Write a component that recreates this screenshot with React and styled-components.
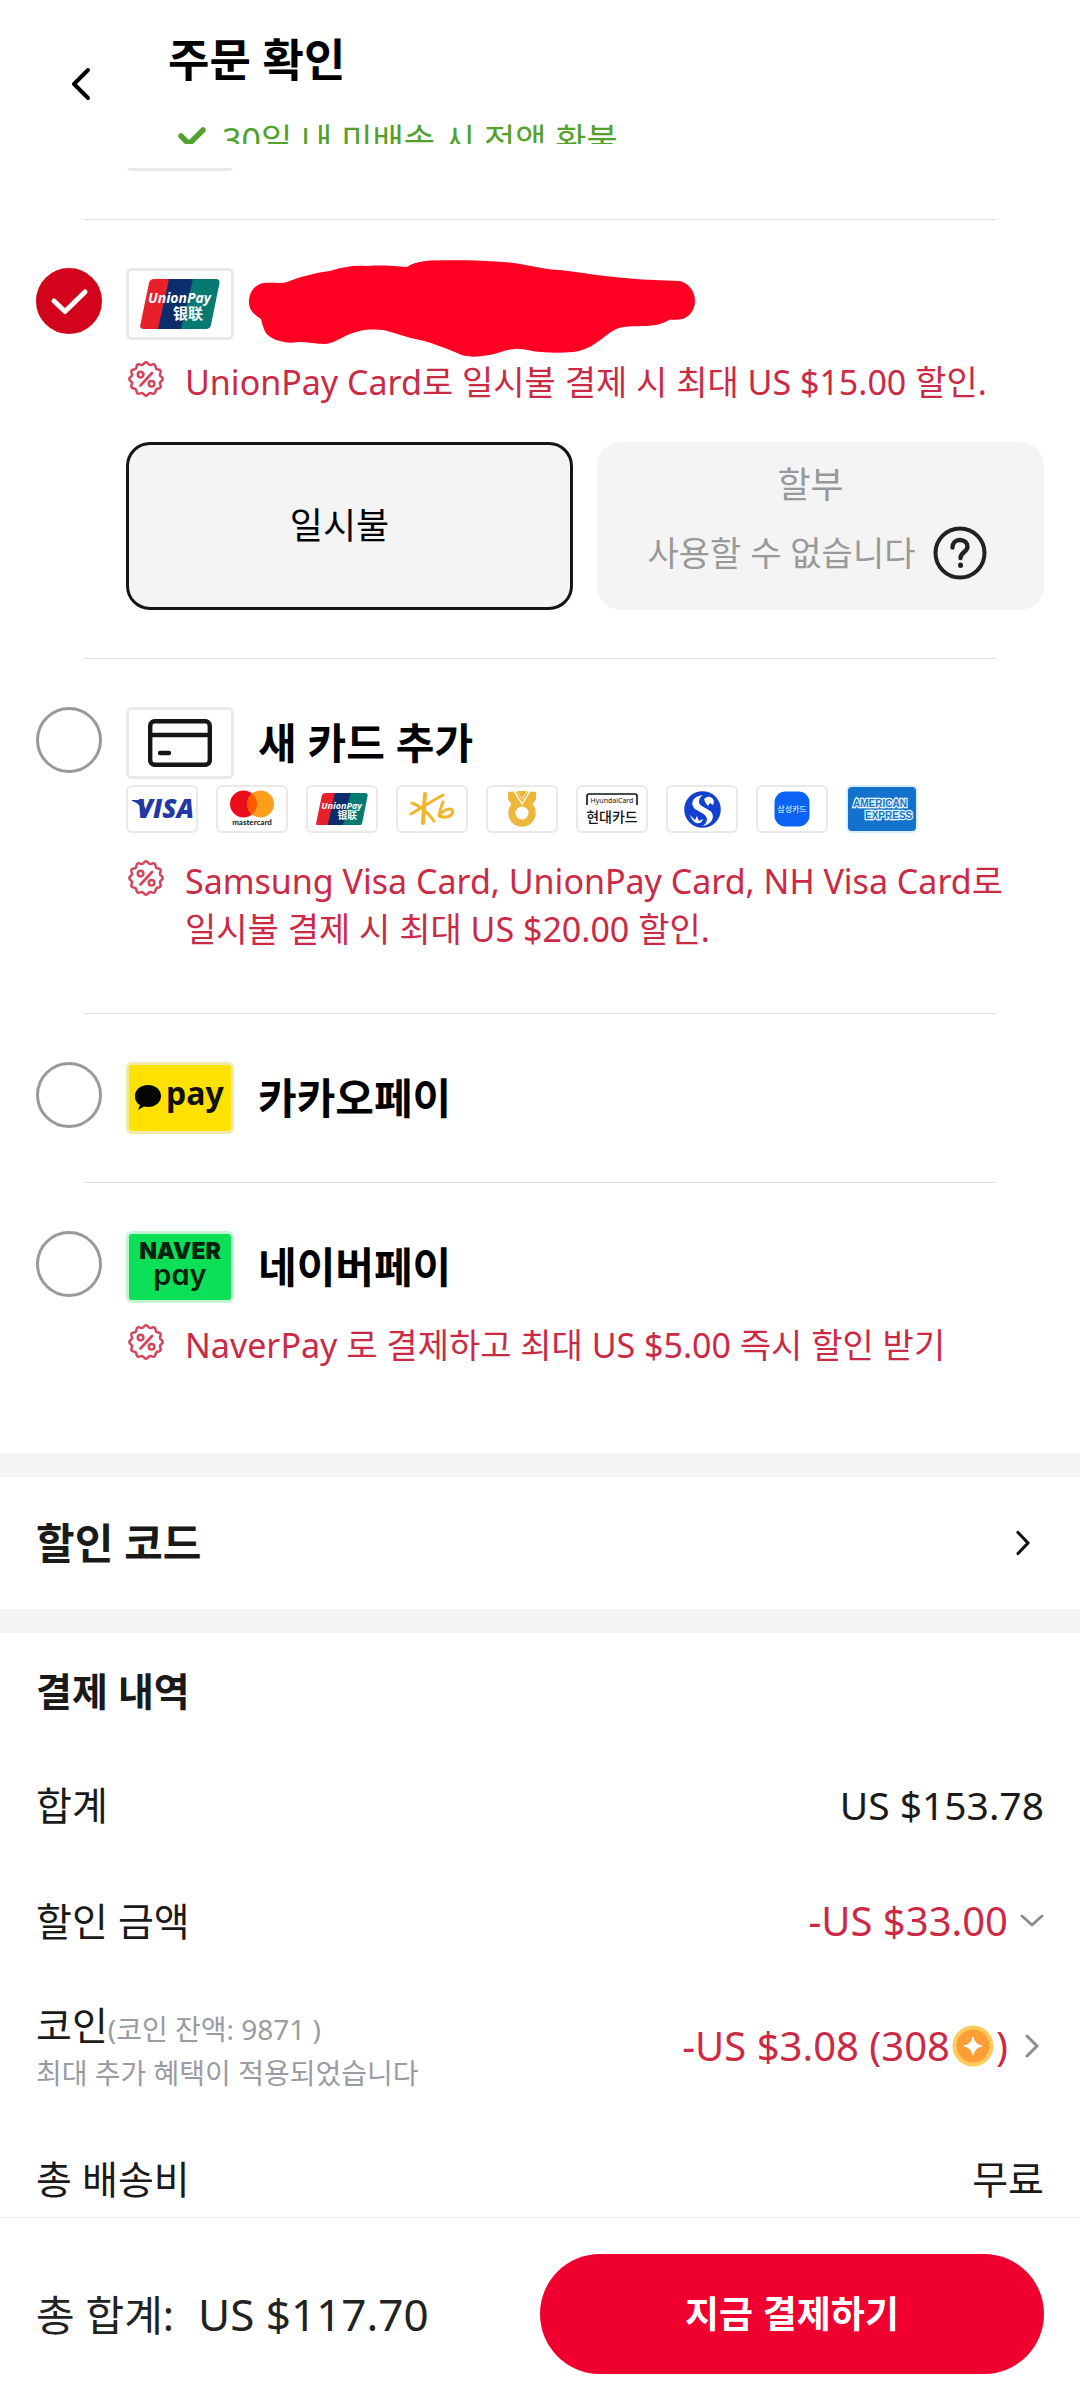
import React, { useState } from "react";
import styled, { createGlobalStyle } from "styled-components";

const GlobalStyle = createGlobalStyle`
  *, *::before, *::after { box-sizing: border-box; }
  body {
    margin: 0;
    background: #fff;
    color: #1a1a1a;
    font-family: "Noto Sans", "Noto Sans CJK KR", sans-serif;
  }
  h1, h2, p, dl, dt, dd, ul { margin: 0; padding: 0; }
  button { font-family: inherit; border: 0; padding: 0; background: none; color: inherit; cursor: pointer; }
  svg { display: block; flex: none; }
`;

const Page = styled.div`
  min-height: 100vh;
  display: flex;
  flex-direction: column;
`;

const Header = styled.header`
  display: grid;
  grid-template-columns: 168px 1fr;
  align-items: center;
`;

const BackButton = styled.button`
  display: flex;
  justify-content: center;
  padding: 24px 6px 24px 0;
`;

const HeaderBody = styled.div`
  padding: 30px 36px 24px 0;
`;

const PageTitle = styled.h1`
  font-size: 45px;
  line-height: 60px;
  font-weight: 700;
  color: #000;
`;

const Guarantee = styled.p`
  display: flex;
  align-items: flex-start;
  gap: 16px;
  height: 28px;
  margin-top: 26px;
  padding-left: 10px;
  overflow: hidden;
  font-size: 34px;
  line-height: 48px;
  color: #52a12b;
`;

const Main = styled.main`
  flex: 1;
`;

const ScrolledOption = styled.div`
  display: flex;
  align-items: flex-end;
  height: 3px;
  padding-left: 126px;
  overflow: hidden;
`;

const OptionList = styled.div`
  padding: 48px 0 24px;
`;

const Divider = styled.hr`
  height: 1px;
  margin: 0 84px;
  border: 0;
  background: #e0e0e0;
`;

const Option = styled.section`
  display: grid;
  grid-template-columns: 66px 1fr;
  column-gap: 24px;
  padding: 48px 36px;
`;

const RadioBox = styled.span`
  display: grid;
  width: 66px;
  height: 66px;
  > * { grid-area: 1 / 1; }
  > svg { pointer-events: none; }
`;

const Radio = styled.input`
  appearance: none;
  width: 66px;
  height: 66px;
  margin: 0;
  border: 3px solid #999;
  border-radius: 50%;
  background: #fff;
  &:checked {
    border-color: #d3031c;
    background: #d3031c;
  }
`;

const OptionHead = styled.label`
  display: flex;
  align-items: center;
  gap: 24px;
  height: 72px;
  font-size: 42px;
  line-height: 60px;
  font-weight: 700;
  color: #000;
`;

const LogoBox = styled.span`
  display: flex;
  flex: none;
  align-items: center;
  justify-content: center;
  width: ${(p) => (p.$small ? 72 : 108)}px;
  height: ${(p) => (p.$small ? 48 : 72)}px;
  border: ${(p) => (p.$small ? 2 : 3)}px solid ${(p) => p.$edge || "#e9e9e9"};
  border-radius: 6px;
  background: ${(p) => p.$fill || "#fff"};
`;

const HiddenNumber = styled.span`
  position: relative;
  > svg {
    position: absolute;
    left: -9px;
    top: -44px;
  }
`;

const BrandRow = styled.div`
  display: flex;
  flex-wrap: wrap;
  gap: 18px;
  padding: 6px 0;
`;

const Notice = styled.p`
  display: flex;
  align-items: flex-start;
  gap: 21px;
  margin-top: 18px;
  padding: 0 0 12px 2px;
  font-size: 34px;
  line-height: 48px;
  color: #cc2945;
  word-break: keep-all;
  > svg { margin-top: 3px; }
`;

const Plans = styled.div`
  display: grid;
  grid-template-columns: 1fr 1fr;
  gap: 24px;
  margin-top: 24px;
`;

const Plan = styled.button`
  display: flex;
  flex-direction: column;
  align-items: center;
  justify-content: center;
  height: 168px;
  border: 3px solid ${(p) => (p.$active ? "#151515" : "#f4f4f4")};
  border-radius: 24px;
  background: #f4f4f4;
  font-size: 36px;
  line-height: 54px;
  color: ${(p) => (p.$active ? "#000" : "#999")};
`;

const PlanLabel = styled.span`
  padding-right: 20px;
`;

const PlanNote = styled.span`
  display: flex;
  align-items: center;
  gap: 18px;
  height: 82px;
  padding-right: 6px;
  font-size: 34px;
`;

const Band = styled.div`
  height: 24px;
  background: #f4f4f4;
`;

const CodeRow = styled.button`
  display: flex;
  align-items: center;
  justify-content: space-between;
  width: 100%;
  height: 132px;
  padding: 0 36px;
  font-size: 42px;
  line-height: 60px;
  font-weight: 700;
`;

const Summary = styled.section`
  display: grid;
  gap: 54px;
  padding: 28px 36px 6px;
`;

const SummaryTitle = styled.h2`
  font-size: 39px;
  line-height: 60px;
  font-weight: 700;
`;

const Lines = styled.dl`
  display: grid;
  gap: 56px;
  font-size: 39px;
`;

const Line = styled.div`
  display: flex;
  align-items: center;
  justify-content: space-between;
  line-height: 60px;
`;

const CoinTerm = styled.dt`
  display: grid;
  gap: 6px;
  line-height: 36px;
`;

const Hint = styled.span`
  font-size: 28px;
  line-height: ${(p) => (p.$block ? 40 : 36)}px;
  color: #999ba3;
`;

const Amount = styled.dd`
  display: flex;
  align-items: center;
  gap: 12px;
  padding-bottom: ${(p) => (p.$raised ? 8 : 0)}px;
  font-size: ${(p) => (p.$saving ? 40 : 39)}px;
  color: ${(p) => (p.$saving ? "#cc2945" : "inherit")};
`;

const CoinAmount = styled.span`
  display: flex;
  align-items: center;
  > svg { margin: 0 2px; }
`;

const Footer = styled.footer`
  position: sticky;
  bottom: 0;
  display: grid;
  grid-template-columns: 1fr 1fr;
  align-items: center;
  padding: 36px 36px 30px;
  border-top: 1px solid #ececec;
  background: #fff;
`;

const Total = styled.p`
  display: flex;
  align-items: baseline;
  gap: 24px;
  font-size: 42px;
  line-height: 60px;
  color: #222;
`;

const TotalValue = styled.span`
  font-size: 44px;
`;

const PayButton = styled.button`
  height: 120px;
  border-radius: 60px;
  background: #f0002f;
  color: #fff;
  font-size: 37px;
  line-height: 54px;
  font-weight: 700;
`;

const Chevron = ({ size = 24, d, color, width = 3 }) => (
  <svg width={size} height={size} viewBox={`0 0 ${size} ${size}`} fill="none" stroke={color}
    strokeWidth={width} strokeLinecap="round" strokeLinejoin="round" aria-hidden="true">
    <path d={d} />
  </svg>
);

const scallop = (() => {
  let d = "";
  for (let i = 0; i < 144; i++) {
    const t = (i / 144) * Math.PI * 2;
    const r = 15.6 + 1.1 * Math.cos(12 * t);
    d += `${i ? "L" : "M"}${(18 + r * Math.sin(t)).toFixed(2)} ${(18 - r * Math.cos(t)).toFixed(2)}`;
  }
  return d + "Z";
})();

const PercentBadge = () => (
  <svg width="36" height="36" viewBox="0 0 36 36" fill="none" stroke="#d4455c" strokeWidth="2.5"
    strokeLinecap="round" strokeLinejoin="round" aria-hidden="true">
    <path d={scallop} />
    <path d="M24 12L12.5 24.5" strokeWidth="2.6" />
    <circle cx="12.6" cy="13.6" r="2.8" />
    <circle cx="23.6" cy="22.8" r="2.8" />
  </svg>
);

const UnionPay = ({ width = 80 }) => (
  <svg width={width} height={width * 0.625} viewBox="0 0 80 50" role="img" aria-label="UnionPay">
    <path d="M14 0H32L22 50H4Q-1 50 .5 45L9 4Q10 0 14 0Z" fill="#e8202a" />
    <path d="M29 0H55L45 50H18Z" fill="#0b2d6b" />
    <path d="M53 0H76Q80 0 79.5 4L71 46Q70 50 66 50H41Z" fill="#067a70" />
    <text x="8" y="24" fontFamily="Noto Sans" fontSize="14" fontWeight="700" fontStyle="italic" fill="#fff">UnionPay</text>
    <text x="33" y="40" fontFamily="Noto Sans CJK SC" fontSize="15" fontWeight="700" fill="#fff">银联</text>
  </svg>
);

const CardIcon = () => (
  <svg width="64" height="48" viewBox="0 0 64 48" fill="none" stroke="#161616" strokeWidth="4.4" strokeLinecap="round" aria-hidden="true">
    <rect x="2.2" y="2.2" width="59.6" height="43.6" rx="4.5" />
    <path d="M3 16H61" strokeLinecap="butt" />
    <path d="M12 34H21" />
  </svg>
);

const Visa = () => (
  <svg width="62" height="26" viewBox="0 0 62 26" role="img" aria-label="Visa">
    <path d="M1 4H11L16 17L13 17Q9 7 1 5Z" fill="#2337a5" />
    <text x="6" y="22" fontFamily="Open Sans" fontSize="26" fontWeight="800" fontStyle="italic" fill="#2337a5">VISA</text>
  </svg>
);

const Mastercard = () => (
  <svg width="46" height="38" viewBox="0 0 46 38" role="img" aria-label="Mastercard">
    <circle cx="14.5" cy="14" r="13.5" fill="#eb0d1b" />
    <circle cx="31.5" cy="14" r="13.5" fill="#f99f1b" />
    <path d="M23 3.5A13.5 13.5 0 0 1 23 24.5A13.5 13.5 0 0 1 23 3.5Z" fill="#ff5a00" />
    <text x="23" y="35" textAnchor="middle" fontFamily="Lato" fontSize="8" fontWeight="700" fill="#111">mastercard</text>
  </svg>
);

const Kb = () => (
  <svg width="46" height="34" viewBox="0 0 46 34" fill="none" stroke="#f4b52e" strokeLinecap="round" strokeLinejoin="round" role="img" aria-label="KB">
    <path d="M16 2Q15 17 14 31" strokeWidth="4" />
    <path d="M34 3Q18 12 2 22" strokeWidth="3" />
    <path d="M3 11Q15 15 25 29" strokeWidth="3" />
    <path d="M34 10Q31 17 30 24Q35 17 41 17Q45 18 43 22Q39 27 30 24" strokeWidth="3" />
  </svg>
);

const Nh = () => (
  <svg width="30" height="36" viewBox="0 0 30 36" role="img" aria-label="NH">
    <circle cx="15" cy="22" r="10" fill="none" stroke="#ecb73b" strokeWidth="7.5" />
    <path d="M1 1Q6 0 10 1L15 9L20 1Q24 0 29 1V9L26 12V17H4V12L1 9Z" fill="#ecb73b" />
    <path d="M7 0L15 13L23 0" fill="none" stroke="#fff" strokeWidth="1.4" />
    <path d="M10 0L15 8L20 0Z" fill="#ecb73b" />
    <circle cx="15" cy="22" r="6.5" fill="#fff" />
  </svg>
);

const Hyundai = () => (
  <svg width="54" height="34" viewBox="0 0 54 34" role="img" aria-label="현대카드">
    <path d="M2 13V4Q2 2 4 2H50Q52 2 52 4V13" fill="none" stroke="#111" strokeWidth="1.6" />
    <text x="27" y="11" textAnchor="middle" fontFamily="Noto Sans" fontSize="7" fill="#111">HyundaiCard</text>
    <text x="27" y="30" textAnchor="middle" fontFamily="Noto Sans CJK KR" fontSize="14" fontWeight="500" fill="#111">현대카드</text>
  </svg>
);

const Shinhan = () => (
  <svg width="37" height="37" viewBox="0 0 37 37" role="img" aria-label="신한">
    <circle cx="18.5" cy="18.5" r="18.3" fill="#1240d0" />
    <path d="M19 4C9 5 6 12 10 17C14 21 22 22 23 28C23 31 21 34 18 35C26 34 31 28 28 22C25 17 15 16 15 11C15 8 16 6 19 4Z" fill="#fff" />
    <path d="M20 8Q24 4 28 7Q31 9 29 14L26 12L24 15Q21 12 20 8Z" fill="#fff" />
    <path d="M6 24L11 29L13 25L15 30L19 28Q18 33 12 32Q8 30 6 24Z" fill="#fff" />
  </svg>
);

const Samsung = () => (
  <svg width="36" height="36" viewBox="0 0 36 36" role="img" aria-label="삼성카드">
    <rect x=".5" y=".5" width="35" height="35" rx="11" fill="#0b63f6" />
    <text x="18" y="21" textAnchor="middle" fontFamily="Noto Sans CJK KR" fontSize="8" fill="#fff">삼성카드</text>
  </svg>
);

const Amex = () => (
  <svg width="68" height="44" viewBox="0 0 68 44" role="img" aria-label="American Express">
    <g fontFamily="Liberation Sans" fontSize="10" fontWeight="700" fill="#1272cc" stroke="#e6f6ff" strokeWidth="2.4" paintOrder="stroke">
      <text x="5" y="20">AMERICAN</text>
      <text x="17" y="32">EXPRESS</text>
    </g>
  </svg>
);

const KakaoPay = () => (
  <svg width="102" height="66" viewBox="0 0 102 66" role="img" aria-label="카카오페이">
    <path d="M19 20C27 20 32 25 32 31C32 37 27 42 19 42L15 41.5L9 45L11 40C7 38 6 34 6 31C6 25 11 20 19 20Z" fill="#050500" />
    <text x="37" y="40" fontFamily="Noto Sans" fontSize="32" fontWeight="700" fill="#111">pay</text>
  </svg>
);

const NaverPay = () => (
  <svg width="102" height="66" viewBox="0 0 102 66" role="img" aria-label="네이버페이">
    <text x="51" y="25" textAnchor="middle" fontFamily="Inter" fontSize="23" fontWeight="900" fill="#04230f">NAVER</text>
    <text x="51" y="51" textAnchor="middle" fontFamily="Inter" fontSize="29" fontWeight="600" fill="#04230f" style={{ fontFeatureSettings: '"cv11"' }}>pay</text>
  </svg>
);

const HelpIcon = () => (
  <svg width="54" height="54" viewBox="0 0 54 54" fill="none" stroke="#222" strokeLinecap="round" strokeLinejoin="round" aria-hidden="true">
    <circle cx="27" cy="27" r="24.5" strokeWidth="4" />
    <path d="M19.5 21.5C19.5 17 22.5 14 27 14C31.5 14 34.5 17 34.5 20.8C34.5 26 27.5 26 27.5 32" strokeWidth="4.4" />
    <path d="M27.5 39V39.5" strokeWidth="5" />
  </svg>
);

const Coin = () => (
  <svg width="42" height="42" viewBox="0 0 42 42" aria-hidden="true">
    <circle cx="21" cy="21" r="20.5" fill="#fdca5c" />
    <circle cx="21" cy="21" r="16.5" fill="#ff9d36" />
    <path d="M21 12Q22.5 19.5 30 21Q22.5 22.5 21 30Q19.5 22.5 12 21Q19.5 19.5 21 12Z" fill="#fff" stroke="#fff" strokeLinejoin="round" />
  </svg>
);

const Scribble = () => (
  <svg width="448" height="98" viewBox="0 0 448 98" aria-hidden="true">
    <path fill="#ff0022" d="M0 42C0 31 7 24 15 23C23 22 31 24 38 22C50 17 66 13 81 11C93 7 105 5 118 6C132 5 146 6 158 7C164 3 172 1 182 .5C204 0 226 0 247 1.5C266 2 284 7 302 9.5C317 10 332 13 347 15C362 17 378 18 393 19.5L430 21C439 22 446 31 446 41C446 51 439 59 430 59.5Q425 60 421 59.5C417 62 412 64 407 65C395 67 382 65 370 68C361 71 355 78 347 83C340 88 332 91 324 92C313 93 302 93 292 92C283 92 274 88 265 89C255 90 246 95 237 95.5C229 97 221 97 214 95.5C204 91 193 87 182 83C173 80 164 79 155 76C145 73 135 69 125 69.5C117 69 110 71 104 73C94 76 86 83 77 84C68 84 58 82 49 82Q39 84 31 81C23 79 17 75 15 69Q13 64 12 59C6 55 0 51 0 42Z" />
  </svg>
);

const brands = [
  { id: "visa", logo: <Visa /> },
  { id: "mastercard", logo: <Mastercard /> },
  { id: "unionpay", logo: <UnionPay width={52} /> },
  { id: "kb", logo: <Kb /> },
  { id: "nh", logo: <Nh /> },
  { id: "hyundai", logo: <Hyundai /> },
  { id: "shinhan", logo: <Shinhan /> },
  { id: "samsung", logo: <Samsung /> },
  { id: "amex", logo: <Amex />, fill: "#1272cc", edge: "#d9edfc" },
];

function PayOption({ id, logo, title, selected, onSelect, label, fill, edge, children }) {
  return (
    <Option>
      <RadioBox>
        <Radio type="radio" name="payment" id={id} aria-label={label} checked={selected} onChange={() => onSelect(id)} />
        {selected && (
          <svg width="66" height="66" viewBox="0 0 66 66" fill="none" stroke="#fff" strokeWidth="5"
            strokeLinecap="round" strokeLinejoin="round" aria-hidden="true">
            <path d="M18 33L29 43.5L49 24" />
          </svg>
        )}
      </RadioBox>
      <div>
        <OptionHead htmlFor={id}>
          <LogoBox $fill={fill} $edge={edge}>{logo}</LogoBox>
          {title}
        </OptionHead>
        {children}
      </div>
    </Option>
  );
}

export default function App() {
  const [method, setMethod] = useState("unionpay-card");
  const radio = (id) => ({ id, selected: method === id, onSelect: setMethod });

  return (
    <>
      <GlobalStyle />
      <Page>
        <Header>
          <BackButton type="button" aria-label="뒤로">
            <Chevron size={36} d="M25 4L11 18L25 32" color="#000" width={4} />
          </BackButton>
          <HeaderBody>
            <PageTitle>주문 확인</PageTitle>
            <Guarantee>
              <svg width="28" height="48" viewBox="0 0 28 48" fill="none" stroke="#52a12b" strokeWidth="5.5" aria-hidden="true">
                <path d="M3 20L11 28L25 14" strokeLinecap="round" />
              </svg>
              30일 내 미배송 시 전액 환불
            </Guarantee>
          </HeaderBody>
        </Header>

        <Main>
          <ScrolledOption><LogoBox /></ScrolledOption>
          <OptionList>
            <Divider />
            <PayOption {...radio("unionpay-card")} label="UnionPay Card" logo={<UnionPay />}
              title={<HiddenNumber><Scribble /></HiddenNumber>}>
              <Notice><PercentBadge />UnionPay Card로 일시불 결제 시 최대 US $15.00 할인.</Notice>
              <Plans>
                <Plan type="button" $active><PlanLabel>일시불</PlanLabel></Plan>
                <Plan type="button" disabled>
                  <PlanLabel>할부</PlanLabel>
                  <PlanNote>사용할 수 없습니다<HelpIcon /></PlanNote>
                </Plan>
              </Plans>
            </PayOption>
            <Divider />
            <PayOption {...radio("new-card")} logo={<CardIcon />} title="새 카드 추가">
              <BrandRow>
                {brands.map((b) => (
                  <LogoBox key={b.id} $small $fill={b.fill} $edge={b.edge}>{b.logo}</LogoBox>
                ))}
              </BrandRow>
              <Notice><PercentBadge />Samsung Visa Card, UnionPay Card, NH Visa Card로 일시불 결제 시 최대 US $20.00 할인.</Notice>
            </PayOption>
            <Divider />
            <PayOption {...radio("kakao-pay")} logo={<KakaoPay />} fill="#ffe100" edge="#f3e9a8" title="카카오페이" />
            <Divider />
            <PayOption {...radio("naver-pay")} logo={<NaverPay />} fill="#0be058" edge="#c4f3d4" title="네이버페이">
              <Notice><PercentBadge />NaverPay 로 결제하고 최대 US $5.00 즉시 할인 받기</Notice>
            </PayOption>
          </OptionList>

          <Band />
          <CodeRow type="button">
            할인 코드
            <Chevron size={42} d="M16 10.5L26 21L16 31.5" color="#111" width={3.2} />
          </CodeRow>
          <Band />

          <Summary>
            <SummaryTitle>결제 내역</SummaryTitle>
            <Lines>
              <Line><dt>합계</dt><Amount>US $153.78</Amount></Line>
              <Line>
                <dt>할인 금액</dt>
                <Amount $saving>
                  -US $33.00
                  <button type="button" aria-label="할인 금액 펼치기"><Chevron d="M2 7L12 16L22 7" color="#8b8d94" /></button>
                </Amount>
              </Line>
              <Line>
                <CoinTerm>
                  <span>코인<Hint>(코인 잔액: 9871 )</Hint></span>
                  <Hint $block>최대 추가 혜택이 적용되었습니다</Hint>
                </CoinTerm>
                <Amount $saving $raised>
                  <CoinAmount>-US $3.08 (308<Coin />)</CoinAmount>
                  <button type="button" aria-label="코인 사용"><Chevron d="M7 2L17 12L7 22" color="#8b8d94" /></button>
                </Amount>
              </Line>
              <Line><dt>총 배송비</dt><Amount>무료</Amount></Line>
            </Lines>
          </Summary>
        </Main>

        <Footer>
          <Total>총 합계:<TotalValue>US $117.70</TotalValue></Total>
          <PayButton type="button">지금 결제하기</PayButton>
        </Footer>
      </Page>
    </>
  );
}
